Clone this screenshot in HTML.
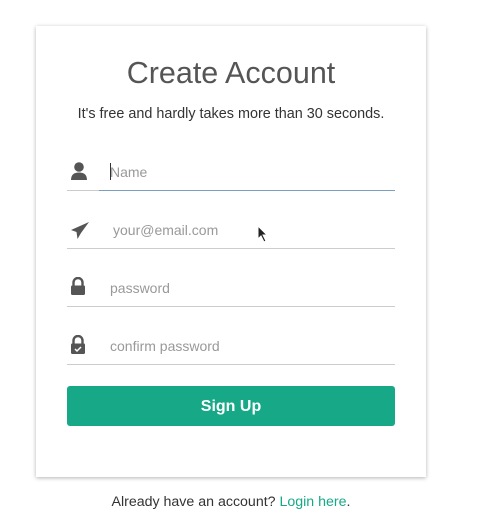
<!DOCTYPE html>
<html><head><meta charset="utf-8"><style>
body{margin:0;width:484px;height:508px;background:#fff;font-family:"Liberation Sans",Arial,sans-serif;position:relative;overflow:hidden}
.card{position:absolute;left:36px;top:26px;width:390px;height:451px;background:#fff;box-shadow:0 1px 4px rgba(0,0,0,.3)}
.c{position:absolute;left:36px;width:390px;text-align:center}
h1{top:56px;margin:0;font-weight:normal;font-size:30.5px;color:#555}
.sub{top:106px;font-size:14.4px;color:#333}
.f{position:absolute;left:67px;width:328px;height:1px;background:#ccc}
.ph{position:absolute;left:110px;font-size:14px;color:#999}
.ic{position:absolute;left:70px}
.btn{position:absolute;left:67px;top:386px;width:328px;height:40px;background:#17a987;border-radius:3px;color:#fff;font-weight:bold;font-size:16px;text-align:center;line-height:42px}
.foot{top:494px;font-size:14.2px;color:#333}
.foot span{color:#17a987}
</style></head><body>
<div class="card"></div>
<h1 class="c">Create Account</h1>
<div class="c sub">It's free and hardly takes more than 30 seconds.</div>

<svg class="ic" style="top:162px" width="18" height="19" viewBox="0 0 18 19"><circle cx="9" cy="5" r="4.8" fill="#555"/><path d="M1 18 Q1 10.5 9 10.5 Q17 10.5 17 18 Z" fill="#555"/></svg>
<div style="position:absolute;left:110px;top:163px;width:1px;height:17px;background:#333"></div>
<div class="ph" style="top:164px">Name</div>
<div class="f" style="top:190px;left:67px;width:32px"></div>
<div class="f" style="top:190px;left:99px;width:296px;background:#7a9fc0"></div>

<svg class="ic" style="top:221px" width="20" height="19" viewBox="0 0 20 19"><path d="M19 1 L1 9 L6.5 11 L7.5 18 L11 12 Z" fill="#555"/></svg>
<div class="ph" style="top:222px;left:113px">your@email.com</div>
<div class="f" style="top:248px"></div>
<svg style="position:absolute;left:257px;top:225px" width="12" height="18" viewBox="0 0 12 18"><path d="M1 1 L1 14 L4 11 L7 17 L9 16 L6 10 L10 10 Z" fill="#222" stroke="#fff" stroke-width="1"/></svg>

<svg class="ic" style="top:277px" width="16" height="19" viewBox="0 0 16 19"><path d="M3.5 9 V5.5 A4.5 4.5 0 0 1 12.5 5.5 V9" stroke="#555" stroke-width="2.4" fill="none"/><rect x="1" y="8.5" width="14" height="9.5" rx="1.2" fill="#555"/></svg>
<div class="ph" style="top:280px">password</div>
<div class="f" style="top:306px"></div>

<svg class="ic" style="top:335px" width="16" height="20" viewBox="0 0 16 20"><path d="M3.5 9 V5.5 A4.5 4.5 0 0 1 12.5 5.5 V9" stroke="#555" stroke-width="2.4" fill="none"/><rect x="1" y="8.5" width="14" height="10.5" rx="1.2" fill="#555"/><path d="M5 14 L7 16 L11 12" stroke="#fff" stroke-width="1.5" fill="none"/></svg>
<div class="ph" style="top:338px">confirm password</div>
<div class="f" style="top:364px"></div>

<div class="btn">Sign Up</div>
<div class="c foot">Already have an account? <span>Login here</span>.</div>
</body></html>
